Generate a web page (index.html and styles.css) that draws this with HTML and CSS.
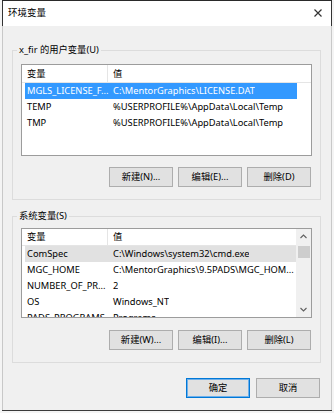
FILE: index.html
```html
<!DOCTYPE html>
<html lang="zh-CN">
<head>
<meta charset="utf-8">
<title>环境变量</title>
<link rel="stylesheet" href="styles.css">
</head>
<body>
<div class="window">
  <div class="titlebar">
    <span class="title">环境变量</span>
    <svg class="close" width="8" height="8" viewBox="0 0 8 8"><path d="M0.5 0.5 L7.5 7.5 M7.5 0.5 L0.5 7.5" stroke="#333" stroke-width="1.2"/></svg>
  </div>
  <div class="body">
    <fieldset class="group group-user">
      <legend>x_fir 的用户变量(U)</legend>
      <div class="listview lv-user">
        <div class="lv-main">
          <div class="lv-header"><span class="h1">变量</span><span class="h2">值</span></div>
          <div class="row selected"><span class="c1">MGLS_LICENSE_F...</span><span class="c2">C:\MentorGraphics\LICENSE.DAT</span></div>
          <div class="row"><span class="c1">TEMP</span><span class="c2">%USERPROFILE%\AppData\Local\Temp</span></div>
          <div class="row"><span class="c1">TMP</span><span class="c2">%USERPROFILE%\AppData\Local\Temp</span></div>
        </div>
      </div>
      <div class="buttons">
        <button class="btn">新建(N)...</button>
        <button class="btn">编辑(E)...</button>
        <button class="btn">删除(D)</button>
      </div>
    </fieldset>
    <fieldset class="group group-sys">
      <legend>系统变量(S)</legend>
      <div class="listview lv-sys">
        <div class="lv-main">
          <div class="lv-header"><span class="h1">变量</span><span class="h2">值</span></div>
          <div class="row inactive"><span class="c1">ComSpec</span><span class="c2">C:\Windows\system32\cmd.exe</span></div>
          <div class="row"><span class="c1">MGC_HOME</span><span class="c2">C:\MentorGraphics\9.5PADS\MGC_HOM...</span></div>
          <div class="row"><span class="c1">NUMBER_OF_PR...</span><span class="c2">2</span></div>
          <div class="row"><span class="c1">OS</span><span class="c2">Windows_NT</span></div>
          <div class="row"><span class="c1">PADS_PROGRAMS...</span><span class="c2">Programs</span></div>
        </div>
        <div class="scrollbar">
          <svg class="arrow" width="7" height="5" viewBox="0 0 7 5"><path d="M0.5 4 L3.5 1 L6.5 4" fill="none" stroke="#606060" stroke-width="1.1"/></svg>
          <div class="thumb"></div>
          <div class="track"></div>
          <svg class="arrow" width="7" height="5" viewBox="0 0 7 5"><path d="M0.5 1 L3.5 4 L6.5 1" fill="none" stroke="#606060" stroke-width="1.1"/></svg>
        </div>
      </div>
      <div class="buttons">
        <button class="btn">新建(W)...</button>
        <button class="btn">编辑(I)...</button>
        <button class="btn">删除(L)</button>
      </div>
    </fieldset>
    <div class="footer">
      <button class="btn btn-default">确定</button>
      <button class="btn">取消</button>
    </div>
  </div>
</div>
</body>
</html>
```

FILE: styles.css
```css
* { box-sizing: border-box; }

html, body {
  margin: 0;
  padding: 0;
}

body {
  background: #f4f4f4;
  font-family: "Noto Sans", "Noto Sans CJK SC", sans-serif;
  font-size: 9.3px;
  color: #000;
}

.window {
  margin-left: 2px;
  width: 330px;
  height: 411px;
  border-top: 1px solid #2a2a2a;
  border-bottom: 1px solid #3a3a3a;
  background: #f0f0f0;
  display: flex;
  flex-direction: column;
}

.titlebar {
  height: 25px;
  background: #fff;
  display: flex;
  align-items: center;
  justify-content: space-between;
  padding: 0 9px 2px 5px;
  border-left: 1px solid #333;
  border-right: 1px solid #333;
}

.title {
  font-size: 9.5px;
  line-height: 12px;
}

.close { display: block; }

.body {
  flex: 1;
  padding: 18px 10px 0 9px;
  border-left: 1px solid #c8c8c8;
  border-right: 1px solid #c8c8c8;
  display: flex;
  flex-direction: column;
}

.group {
  margin: 0;
  padding: 8px 8px 12px 8px;
  border: 1px solid #dcdcdc;
  min-width: 0;
}

.group legend {
  padding: 0 2px;
  margin-left: -4px;
  line-height: 12px;
  font-size: 9.3px;
}

.group-sys {
  margin-top: 10px;
  padding-top: 6px;
}

.listview {
  background: #fff;
  border: 1px solid #9c9c9c;
  display: flex;
}

.lv-user { height: 92px; }
.lv-sys { height: 90px; }

.lv-main {
  flex: 1;
  overflow: hidden;
}

.lv-header {
  height: 17px;
  border-bottom: 1px solid #e5e5e5;
  display: flex;
  line-height: 16px;
}

.lv-user .lv-header { height: 18px; line-height: 17px; }

.lv-header .h1 {
  width: 86px;
  padding-left: 5px;
  border-right: 1px solid #e5e5e5;
}

.lv-header .h2 {
  padding-left: 5px;
}

.row {
  height: 16px;
  line-height: 16px;
  margin: 0 14px 0 3px;
  display: flex;
  white-space: nowrap;
}

.lv-sys .row { margin-right: 0; }

.row .c1 {
  width: 86px;
  padding-left: 2px;
  flex: none;
  overflow: hidden;
}

.row .c2 {
  padding-left: 2px;
  overflow: hidden;
}

.row.selected {
  background: #3399ff;
  color: #fff;
}

.row.inactive {
  background: #e1e1e1;
}

.scrollbar {
  width: 15px;
  background: #f0f0f0;
  display: flex;
  flex-direction: column;
  align-items: center;
  padding: 5px 0 5px;
}

.arrow { display: block; flex: none; }

.thumb {
  margin-top: 7px;
  width: 12px;
  height: 12px;
  background: #cdcdcd;
  flex: none;
}

.track { flex: 1; }

.buttons {
  margin-top: 11px;
  display: flex;
  justify-content: flex-end;
  gap: 5px;
  padding-right: 1px;
}

.group-sys .buttons { margin-top: 12px; }

.btn {
  width: 64px;
  height: 20px;
  padding: 0;
  background: #e1e1e1;
  border: 1px solid #adadad;
  font-family: "Noto Sans", "Noto Sans CJK SC", sans-serif;
  font-size: 9.3px;
  line-height: 18px;
  color: #000;
}

.btn-default {
  border-color: #0078d7;
  box-shadow: inset 0 0 0 1px #6fb0ea;
}

.footer {
  margin-top: 15px;
  display: flex;
  justify-content: flex-end;
  gap: 6px;
  padding-right: 1px;
}
```
